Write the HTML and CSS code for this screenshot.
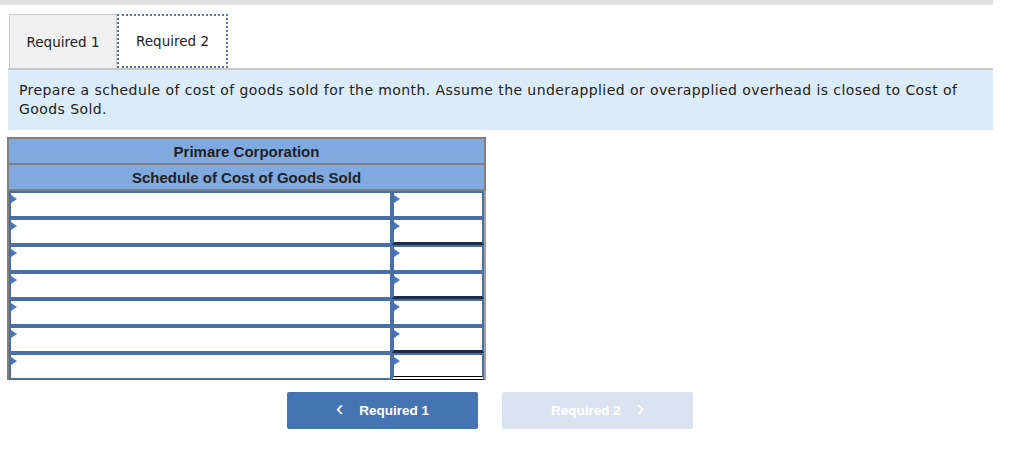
FILE: index.html
```html
<!DOCTYPE html>
<html>
<head>
<meta charset="utf-8">
<link rel="stylesheet" href="styles.css">
</head>
<body>
<div class="topbar"></div>
<div class="tabs">
  <div class="tab">Required 1</div>
  <div class="tab active">Required 2</div>
</div>
<div class="instr">Prepare a schedule of cost of goods sold for the month. Assume the underapplied or overapplied overhead is closed to Cost of Goods Sold.</div>
<table class="sched">
  <tr><th colspan="2">Primare Corporation</th></tr>
  <tr><th colspan="2">Schedule of Cost of Goods Sold</th></tr>
  <tr><td class="l"><div class="inp"></div></td><td class="r"><div class="inp"></div></td></tr>
  <tr><td class="l"><div class="inp"></div></td><td class="r"><div class="inp sum"></div></td></tr>
  <tr><td class="l"><div class="inp"></div></td><td class="r"><div class="inp"></div></td></tr>
  <tr><td class="l"><div class="inp"></div></td><td class="r"><div class="inp sum"></div></td></tr>
  <tr><td class="l"><div class="inp"></div></td><td class="r"><div class="inp"></div></td></tr>
  <tr><td class="l"><div class="inp"></div></td><td class="r"><div class="inp sum"></div></td></tr>
  <tr><td class="l"><div class="inp"></div></td><td class="r"><div class="inp dbl"></div></td></tr>
</table>
<div class="nav">
  <div class="btn prev"><span class="chev">&lsaquo;</span>Required 1</div>
  <div class="btn next">Required 2<span class="chev">&rsaquo;</span></div>
</div>
</body>
</html>
```
FILE: styles.css
```css
html, body { margin: 0; padding: 0; background: #fff; }
body { font-family: "DejaVu Sans", Verdana, sans-serif; color: #222; width: 1024px; height: 474px; overflow: hidden; }
.topbar { width: 993px; height: 5px; background: #e1e1e1; }
.tabs { display: flex; margin-top: 9px; padding-left: 9px; height: 54px; }
.tab { box-sizing: border-box; height: 54px; width: 108px; display: flex; align-items: center; justify-content: center; font-size: 13.5px; background: #f0f0f0; border: 1px solid #cccccc; border-bottom: none; }
.tab.active { width: 111px; background: #fff; border: 2px dotted #4a78c0; border-bottom: 2px dotted #4a78c0; }
.instr { box-sizing: border-box; margin-left: 8px; width: 985px; height: 62px; background: #dcebf8; border-top: 2px solid #c8c8c8; padding: 11px 11px 0 11px; font-size: 14px; letter-spacing: 0.42px; line-height: 19px; color: #222; }
.sched { margin: 7px 0 0 7px; border-collapse: collapse; width: 479px; }
.sched th { background: #80aadf; border: 2px solid #808080; height: 24px; padding: 0; font-family: "Liberation Sans", Arial, sans-serif; font-weight: bold; font-size: 15px; color: #222; text-align: center; }
.sched td { padding: 0; height: 27px; border-left: 2px solid #808080; border-right: 2px solid #a0a0a0; }
.sched td.l { width: 385px; border-right: none; }
.sched td.r { width: 93px; border-left: none; }
.inp { position: relative; box-sizing: border-box; height: 27px; border: 2px solid #4a6fa8; background: #fff; }
.inp::before { content: ""; position: absolute; left: 0; top: 2px; border-left: 6px solid #4a78c0; border-top: 4px solid transparent; border-bottom: 4px solid transparent; }
.inp.sum { border-bottom: 3px solid #1a2c48; }
.inp.dbl { border-bottom: 4px double #000; }
.nav { display: flex; margin: 12px 0 0 287px; gap: 24px; }
.btn { box-sizing: border-box; width: 191px; height: 37px; border-radius: 2px; display: flex; align-items: center; justify-content: center; font-family: "Liberation Sans", Arial, sans-serif; font-weight: bold; font-size: 13.5px; color: #fff; }
.btn.prev { background: #4574b3; }
.btn.next { background: #dae4f1; }
.chev { font-size: 22px; font-weight: normal; line-height: 1; margin-top: -3px; }
.prev .chev { margin-right: 16px; }
.next .chev { margin-left: 16px; }
```
